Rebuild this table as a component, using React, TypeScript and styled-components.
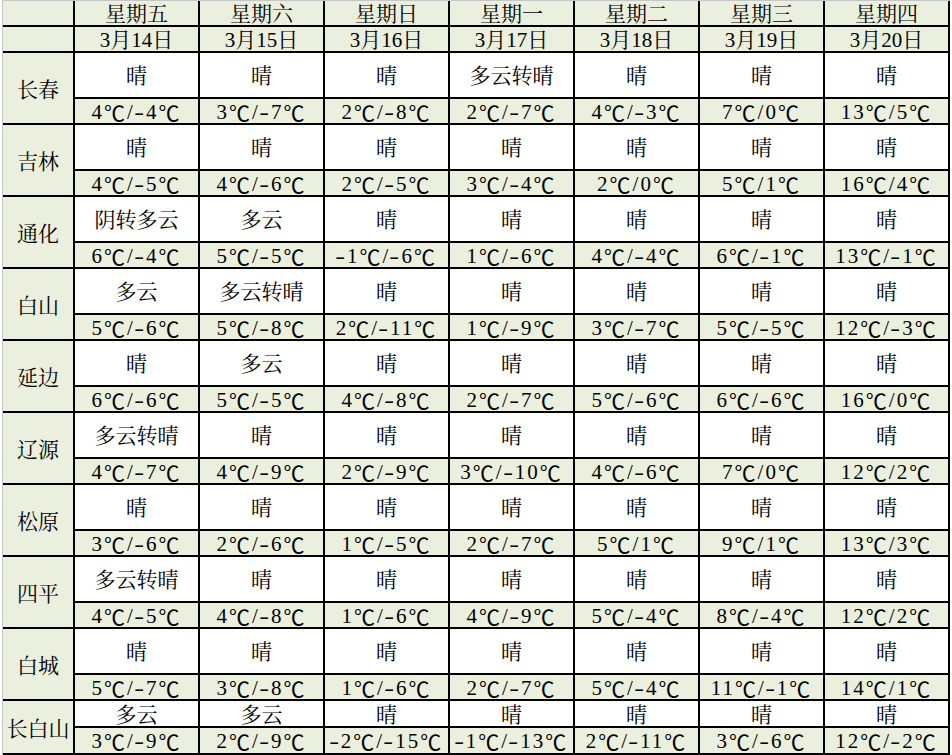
import React from "react";
import styled, { createGlobalStyle } from "styled-components";

const GlobalStyle = createGlobalStyle`
  html, body {
    margin: 0;
    padding: 0;
    background: #fff;
  }
`;

const BEIGE = "#ebf0de";
const LINE = "#000";

interface IForecast {
  city: string;
  weather: string[];
  temps: string[];
}

const DAYS = ["星期五", "星期六", "星期日", "星期一", "星期二", "星期三", "星期四"];
const DATES = ["3月14日", "3月15日", "3月16日", "3月17日", "3月18日", "3月19日", "3月20日"];

const S = "晴";

const FORECASTS: IForecast[] = [
  {
    city: "长春",
    weather: [S, S, S, "多云转晴", S, S, S],
    temps: ["4℃/-4℃", "3℃/-7℃", "2℃/-8℃", "2℃/-7℃", "4℃/-3℃", "7℃/0℃", "13℃/5℃"],
  },
  {
    city: "吉林",
    weather: [S, S, S, S, S, S, S],
    temps: ["4℃/-5℃", "4℃/-6℃", "2℃/-5℃", "3℃/-4℃", "2℃/0℃", "5℃/1℃", "16℃/4℃"],
  },
  {
    city: "通化",
    weather: ["阴转多云", "多云", S, S, S, S, S],
    temps: ["6℃/-4℃", "5℃/-5℃", "-1℃/-6℃", "1℃/-6℃", "4℃/-4℃", "6℃/-1℃", "13℃/-1℃"],
  },
  {
    city: "白山",
    weather: ["多云", "多云转晴", S, S, S, S, S],
    temps: ["5℃/-6℃", "5℃/-8℃", "2℃/-11℃", "1℃/-9℃", "3℃/-7℃", "5℃/-5℃", "12℃/-3℃"],
  },
  {
    city: "延边",
    weather: [S, "多云", S, S, S, S, S],
    temps: ["6℃/-6℃", "5℃/-5℃", "4℃/-8℃", "2℃/-7℃", "5℃/-6℃", "6℃/-6℃", "16℃/0℃"],
  },
  {
    city: "辽源",
    weather: ["多云转晴", S, S, S, S, S, S],
    temps: ["4℃/-7℃", "4℃/-9℃", "2℃/-9℃", "3℃/-10℃", "4℃/-6℃", "7℃/0℃", "12℃/2℃"],
  },
  {
    city: "松原",
    weather: [S, S, S, S, S, S, S],
    temps: ["3℃/-6℃", "2℃/-6℃", "1℃/-5℃", "2℃/-7℃", "5℃/1℃", "9℃/1℃", "13℃/3℃"],
  },
  {
    city: "四平",
    weather: ["多云转晴", S, S, S, S, S, S],
    temps: ["4℃/-5℃", "4℃/-8℃", "1℃/-6℃", "4℃/-9℃", "5℃/-4℃", "8℃/-4℃", "12℃/2℃"],
  },
  {
    city: "白城",
    weather: [S, S, S, S, S, S, S],
    temps: ["5℃/-7℃", "3℃/-8℃", "1℃/-6℃", "2℃/-7℃", "5℃/-4℃", "11℃/-1℃", "14℃/1℃"],
  },
  {
    city: "长白山",
    weather: ["多云", "多云", S, S, S, S, S],
    temps: ["3℃/-9℃", "2℃/-9℃", "-2℃/-15℃", "-1℃/-13℃", "2℃/-11℃", "3℃/-6℃", "12℃/-2℃"],
  },
];

// block rows: weather 46 + temp 26, the last city is squeezed at the bottom
const rowTemplate = [
  "26px 26px",
  ...FORECASTS.slice(0, -1).map(() => "46px 26px"),
  "27px 27px",
].join(" ");

const Sheet = styled.div`
  margin-left: 2px;
  display: grid;
  grid-template-columns: 72px repeat(7, 125px);
  grid-template-rows: ${rowTemplate};
  border-top: 1px solid #c6c6c6;
  border-left: 1px solid #c6c6c6;
  width: max-content;
  font-family: "Liberation Serif", "Noto Serif CJK SC", "Noto Sans CJK SC",
    serif;
  font-size: 21px;
  color: #000;
`;

const Cell = styled.div<{ $white?: boolean }>`
  box-sizing: border-box;
  display: flex;
  align-items: center;
  justify-content: center;
  border-right: 2px solid ${LINE};
  border-bottom: 2px solid ${LINE};
  background: ${(p) => (p.$white ? "#fff" : BEIGE)};
  white-space: nowrap;
  line-height: 22px;
`;

const HeadCell = styled(Cell)`
  padding-top: 1px;
`;

const CityCell = styled(Cell)`
  grid-row: span 2;
  padding-top: 4px;
`;

const WeatherCell = styled(Cell).attrs({ $white: true })`
  padding-top: 2px;
`;

const TempCell = styled(Cell)`
  letter-spacing: 2px;
  padding-top: 1px;
`;

// the full-width degree sign comes from the CJK face, as in the sheet
const Deg = styled.span`
  font-family: "Noto Sans CJK SC", sans-serif;
  letter-spacing: 0;
  margin-right: 2px;
  line-height: 22px;
`;

const Dash = styled.span`
  display: inline-block;
  transform: scaleX(1.4);
  margin: 0 1px;
`;

function Temp({ value }: { value: string }) {
  return (
    <TempCell>
      {value.split("").map((ch, i) =>
        ch === "℃" ? (
          <Deg key={i}>{ch}</Deg>
        ) : ch === "-" ? (
          <Dash key={i}>{ch}</Dash>
        ) : (
          ch
        )
      )}
    </TempCell>
  );
}

export default function App() {
  return (
    <>
      <GlobalStyle />
      <Sheet>
        <HeadCell />
        {DAYS.map((d) => (
          <HeadCell key={d}>{d}</HeadCell>
        ))}
        <HeadCell />
        {DATES.map((d) => (
          <HeadCell key={d}>{d}</HeadCell>
        ))}
        {FORECASTS.map((f) => (
          <React.Fragment key={f.city}>
            <CityCell>{f.city}</CityCell>
            {f.weather.map((w, i) => (
              <WeatherCell key={"w" + i}>{w}</WeatherCell>
            ))}
            {f.temps.map((t, i) => (
              <Temp key={"t" + i} value={t} />
            ))}
          </React.Fragment>
        ))}
      </Sheet>
    </>
  );
}
